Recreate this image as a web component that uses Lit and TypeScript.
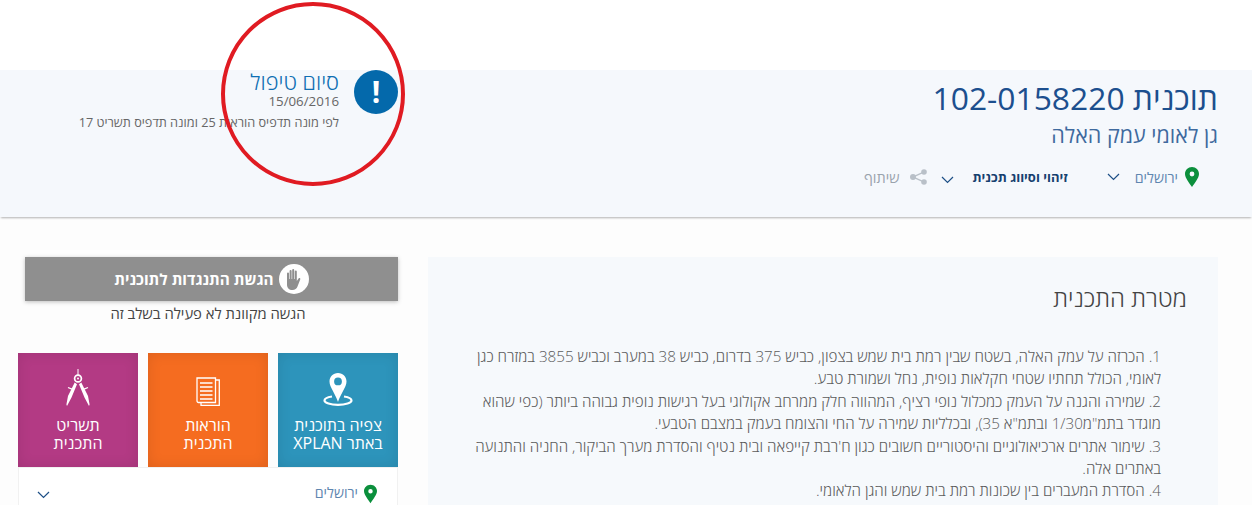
import { LitElement, html, css } from "lit";
import { customElement } from "lit/decorators.js";

const pin = (w: number, h: number) => html`<svg class="pin" width=${w} height=${h} viewBox="0 0 14 20"><path fill="#0b8f3c" fill-rule="evenodd" d="M7 0C3.100 0 0 3.100 0 6.900c0 4 4.400 9.200 7 13.100 2.600-3.900 7-9.100 7-13.100C14 3.100 10.900 0 7 0zm0 4.600a2.400 2.400 0 1 1 0 4.800 2.400 2.400 0 0 1 0-4.800z"/></svg>`;
const chev = html`<svg class="chev" width="13" height="8" viewBox="0 0 13 8"><path d="M1 1l5.500 5.500L12 1" fill="none" stroke="#1d4f86" stroke-width="1.200"/></svg>`;

@customElement("app-root")
export class AppRoot extends LitElement {
  static styles = css`
    :host { display: block; height: 505px; overflow: hidden; position: relative; background: #fff;
      font-family: "Open Sans", "Noto Sans", "DejaVu Sans", sans-serif; direction: rtl; }
    .top { height: 70px; background: #fff; }
    .band { height: 147px; background: #f5f8fc; box-shadow: 0 2px 2px -1px rgba(0,0,0,.3); display: flex; padding: 0 34px 0 0; box-sizing: border-box; position: relative; }
    .plan { display: flex; flex-direction: column; align-items: flex-start; }
    h1 { margin: 5px 0 0; font-size: 31.800px; line-height: 46px; font-weight: 400; color: #1c4f8e; white-space: nowrap; }
    h2 { margin: 0; font-size: 21.500px; line-height: 27px; font-weight: 400; color: #3f6a9e; white-space: nowrap; }
    .tools { display: flex; align-items: center; margin-top: 19px; margin-right: 19px; font-size: 14.200px; color: #5f86b0; white-space: nowrap; height: 20px; }
    .tools .pin { margin-left: 7px; }
    .city { margin-left: 15px; }
    .c1 { margin-left: 39px; display: flex; }
    .tools b { color: #16406f; font-size: 13px; font-weight: 700; margin-left: 19px; }
    .c2 { margin-top: 5px; display: flex; }
    .share { color: #9aa3ad; font-size: 14.500px; }
    .shareic { margin: 0 14px 0 10px; }
    .status { position: absolute; left: 78px; top: 0; width: 320px; display: flex; gap: 15px; }
    .alert { flex: none; width: 44px; height: 44px; border-radius: 50%; background: #0469ab; color: #fff; font-size: 30px; font-weight: 700; line-height: 44px; text-align: center; }
    .stxt { flex: 1; white-space: nowrap; }
    .st { font-size: 21.800px; line-height: 24px; font-weight: 300; color: #0f6fb3; }
    .sd { font-size: 13.300px; line-height: 17px; color: #666; margin-top: -1px; }
    .sn { font-size: 12.700px; line-height: 17px; color: #666; margin-top: 4px; }
    .ring { position: absolute; left: 221px; top: 2px; width: 184px; height: 184px; border: 4px solid #e01b22; border-radius: 50%; box-sizing: border-box; pointer-events: none; }
    .main { display: flex; gap: 30px; padding: 40px 34px 0 18px; align-items: flex-start; background: #fdfdfd; height: 288px; box-sizing: border-box; }
    .article { width: 790px; flex: none; background: #f6f9fc; box-sizing: border-box; padding: 24px 31px 0 30px; height: 260px; }
    h3 { margin: 0; font-size: 24px; line-height: 34px; font-weight: 300; color: #444; }
    .article p { margin: 30px 26px 0 7px; font-size: 15.200px; line-height: 22.400px; font-weight: 300; color: #5c5c5c; }
    .side { width: 380px; flex: none; }
    .obj { margin-left: 7px; height: 44px; background: #8f8f8f; box-shadow: 0 1px 4px rgba(0,0,0,.25); color: #fff; font-size: 15.300px; font-weight: 700; display: flex; align-items: center; justify-content: center; gap: 5px; }
    .hand { width: 30px; height: 30px; border-radius: 50%; background: #fff; display: flex; align-items: center; justify-content: center; }
    .note { text-align: center; font-size: 14.800px; line-height: 24px; color: #444; }
    .tiles { display: flex; gap: 10px; margin-top: 28px; }
    .tile { width: 120px; height: 114px; color: #fff; text-align: center; font-size: 16px; line-height: 18px; display: flex; flex-direction: column; align-items: center; box-sizing: border-box; padding-top: 15px; box-shadow: inset 0 0 14px rgba(0,0,0,.1); }
    .ico { height: 38px; margin-bottom: 10px; display: flex; align-items: flex-end; }
    .b { background: #2d94bb; } .o { background: #f56c20; } .m { background: #b33a84; }
    .place { background: #fff; border: 1px solid #f1f1f1; height: 60px; box-sizing: border-box; display: flex; align-items: flex-start; padding: 15px 20px 0 18px; font-size: 14.200px; line-height: 20px; color: #5f86b0; width: 380px; }
    .place .pin { margin-left: 6px; margin-top: 1px; }
    .place .chev { margin-right: auto; margin-top: 8px; }
  `;
  render() {
    return html`
      <div class="top"></div>
      <header class="band">
        <div class="plan">
          <h1>תוכנית 102-0158220</h1>
          <h2>גן לאומי עמק האלה</h2>
          <div class="tools">
            ${pin(14, 20)}<span class="city">ירושלים</span><span class="c1">${chev}</span>
            <b>זיהוי וסיווג תכנית</b><span class="c2">${chev}</span>
            <svg class="shareic" width="17" height="16" viewBox="0 0 17 16"><g fill="#b9c0c8"><circle cx="3" cy="8" r="3"/><circle cx="14" cy="3" r="2.800"/><circle cx="14" cy="13" r="2.800"/><path d="M3 7.300L14 2.300l.5 1.200L3.500 8.500zM3.500 7.500l11 5-.5 1.200-11-5z"/></g></svg>
            <span class="share">שיתוף</span>
          </div>
        </div>
        <div class="status">
          <div class="alert">!</div>
          <div class="stxt">
            <div class="st">סיום טיפול</div>
            <div class="sd">15/06/2016</div>
            <div class="sn">לפי מונה תדפיס הוראות 25 ומונה תדפיס תשריט 17</div>
          </div>
        </div>
      </header>
      <div class="ring"></div>
      <main class="main">
        <article class="article">
          <h3>מטרת התכנית</h3>
          <p>1. הכרזה על עמק האלה, בשטח שבין רמת בית שמש בצפון, כביש 375 בדרום, כביש 38 במערב וכביש 3855 במזרח כגן לאומי, הכולל תחתיו שטחי חקלאות נופית, נחל ושמורת טבע.<br>
          2. שמירה והגנה על העמק כמכלול נופי רציף, המהווה חלק ממרחב אקולוגי בעל רגישות נופית גבוהה ביותר (כפי שהוא מוגדר בתמ"מ1/30 ובתמ"א 35), ובכלליות שמירה על החי והצומח בעמק במצבם הטבעי.<br>
          3. שימור אתרים ארכיאולוגיים והיסטוריים חשובים כגון ח'רבת קייפאה ובית נטיף והסדרת מערך הביקור, החניה והתנועה באתרים אלה.<br>
          4. הסדרת המעברים בין שכונות רמת בית שמש והגן הלאומי.</p>
        </article>
        <aside class="side">
          <div class="obj"><span class="hand"><svg width="16" height="21" viewBox="0 0 16 21"><path fill="#8f8f8f" d="M1 4.500a1 1 0 0 1 2 0V10h.6V2a1 1 0 0 1 2 0v8h.6V1a1 1 0 0 1 2 0v9h.6V2.500a1 1 0 0 1 2 0V12l1.800-2.600c.7-1 2.100-.2 1.700.8L11.500 17.500C10.700 19.500 9 21 6.500 21 3 21 1 19 1 15.500z"/></svg></span>הגשת התנגדות לתוכנית</div>
          <div class="note">הגשה מקוונת לא פעילה בשלב זה</div>
          <div class="tiles">
            <div class="tile b"><span class="ico"><svg width="30" height="33" viewBox="0 0 30 33"><path fill="none" stroke="#fff" stroke-width="2.200" d="M9 23.500c-4.500.7-7.500 2.200-7.500 4 0 2.400 6 4.300 13.500 4.300s13.500-1.900 13.500-4.300c0-1.800-3-3.300-7.500-4"/><path fill="#fff" fill-rule="evenodd" d="M15 0C10 0 6.500 3.800 6.500 8.500 6.500 14 12.500 21 15 29c2.500-8 8.500-15 8.500-20.500C23.500 3.800 20 0 15 0zm0 4.500a3.900 3.900 0 1 1 0 7.800 3.900 3.900 0 0 1 0-7.800z"/></svg></span>צפיה בתוכנית<br>באתר XPLAN</div>
            <div class="tile o"><span class="ico"><svg width="24" height="29" viewBox="0 0 24 29"><path fill="none" stroke="#fff" stroke-width="1.300" d="M19.500 3h3.800v25.300H5V25.500M1 1h18.500v24.500H2.500A1.500 1.500 0 0 1 1 24z"/><path stroke="#fff" stroke-width="1.500" d="M4 6h12.500M4 10h12.500M4 14h12.500M4 18h12.500M4 22h12.500"/></svg></span>הוראות<br>התכנית</div>
            <div class="tile m"><span class="ico"><svg width="24" height="37" viewBox="0 0 24 37"><path fill="#fff" d="M11.500 0h1v6h-1zM8.700 13.500l2.300 1.700-5.500 13.300L1 37l-.6-1.500L2 27zM15.300 13.500l-2.300 1.700 5.500 13.300L23 37l.6-1.500L22 27z"/><circle cx="12" cy="9.500" r="3.400" fill="none" stroke="#fff" stroke-width="1.700"/><circle cx="12" cy="9.500" r="1" fill="#fff"/><path stroke="#fff" stroke-width="1.300" d="M2 18.500l4 1.700M22 18.500l-4 1.700"/></svg></span>תשריט<br>התכנית</div>
          </div>
          <div class="place">${pin(13, 20)}<span>ירושלים</span>${chev}</div>
        </aside>
      </main>`;
  }
}
